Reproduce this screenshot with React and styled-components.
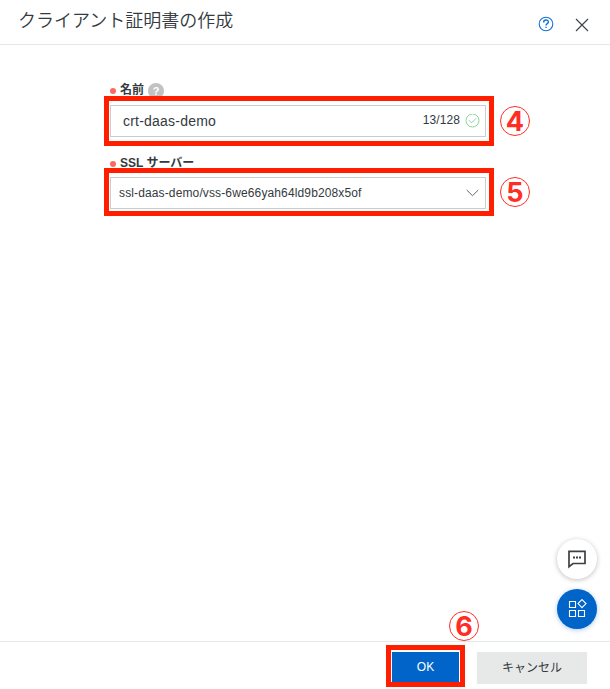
import React from "react";
import styled, { createGlobalStyle } from "styled-components";

const GlobalStyle = createGlobalStyle`
  * { box-sizing: border-box; }
  body {
    margin: 0;
    background: #fff;
    color: #333a40;
    font-family: "Liberation Sans", "Noto Sans CJK JP", sans-serif;
    font-size: 12px;
  }
`;

const Panel = styled.div`
  display: flex;
  flex-direction: column;
  position: relative;
  height: 689px;
  overflow: hidden;
`;

const Header = styled.header`
  display: flex;
  justify-content: space-between;
  height: 45px;
  padding: 0 20px 0 18px;
  border-bottom: 1px solid #e6e8e8;
`;

const Title = styled.h1`
  margin: 0;
  font: 350 18px/38px "Noto Sans CJK JP", sans-serif;
  white-space: nowrap;
`;

const HeaderActions = styled.div`
  display: flex;
  align-items: center;
  gap: 20px;
  padding-top: 4px;
`;

const Form = styled.main`
  flex: 1;
  padding: 32px 0 0 110px;
`;

const Field = styled.section`
  width: 376px;
  height: ${(p) => p.$height}px;
`;

const Label = styled.div`
  display: flex;
  align-items: center;
  height: ${(p) => p.$height}px;
  padding-bottom: ${(p) => p.$gap}px;
  font: 700 12px/18px "Liberation Sans", "Noto Sans CJK JP", sans-serif;
`;

const Required = styled.span`
  width: 6px;
  height: 6px;
  margin: ${(p) => p.$drop}px 4px 0 0;
  border-radius: 50%;
  background: #fb6a61;
`;

const Hint = styled.span`
  width: 16px;
  height: 16px;
  margin: 3px 0 0 4px;
  border-radius: 50%;
  background: #c2c2c2;
  color: #fff;
  text-align: center;
  font: 700 11px/16px "Liberation Sans", sans-serif;
`;

const Control = styled.div`
  position: relative;
  display: flex;
  align-items: center;
  height: 32px;
  padding: 0 5px 0 ${(p) => p.$inset}px;
  border: 1px solid #c9cdcd;
  font-size: ${(p) => p.$size}px;
`;

const Value = styled.span`
  flex: 1;
  white-space: nowrap;
  letter-spacing: ${(p) => p.$tracking}px;
`;

const Counter = styled.span`
  margin: -3px 5px 0 0;
  font-size: 12px;
  letter-spacing: 0.1px;
`;

const Highlight = styled.div`
  position: absolute;
  top: ${(p) => p.$top}px;
  right: ${(p) => p.$right}px;
  bottom: ${(p) => p.$bottom}px;
  left: ${(p) => p.$left}px;
  border: 5px solid #ff1f00;
  pointer-events: none;
`;

const Step = styled.div`
  position: absolute;
  left: ${(p) => p.$left}px;
  top: ${(p) => p.$top}px;
  width: 30px;
  height: 30px;
  border: 1.4px solid #ff2d24;
  border-radius: 50%;
  color: #ff2d24;
  text-align: center;
  font: 700 27px/30px "Inter", sans-serif;
`;

const FloatingButton = styled.button`
  position: absolute;
  right: 13px;
  bottom: ${(p) => p.$bottom}px;
  display: flex;
  align-items: center;
  justify-content: center;
  width: 40px;
  height: 40px;
  padding: 0;
  border: 0;
  border-radius: 50%;
  background: ${(p) => (p.$primary ? "#0064c8" : "#fff")};
  box-shadow: 0 1px 5px ${(p) => (p.$primary ? "#0064c855" : "#00000040")};
`;

const Footer = styled.footer`
  display: flex;
  align-items: flex-start;
  justify-content: flex-end;
  gap: 18px;
  height: 48px;
  padding: 10px 23px 0 0;
  border-top: 1px solid #e6e8e8;
`;

const ButtonSlot = styled.div`
  position: relative;
`;

const Button = styled.button`
  display: block;
  width: ${(p) => p.$width}px;
  height: ${(p) => p.$height}px;
  padding: 0;
  border: 0;
  background: ${(p) => (p.$primary ? "#0064c8" : "#e7e9e8")};
  color: ${(p) => (p.$primary ? "#fff" : "#333a40")};
  font: 400 12px/30px "Liberation Sans", "Noto Sans CJK JP", sans-serif;
`;

const Icon = styled.svg`
  display: block;
  flex: none;
  fill: none;
  stroke: ${(p) => p.$color};
  stroke-width: ${(p) => p.$weight || 1};
`;

export default function App() {
  return (
    <>
      <GlobalStyle />
      <Panel>
        <Header>
          <Title>クライアント証明書の作成</Title>
          <HeaderActions>
            <Icon width="16" height="16" viewBox="0 0 16 16" $color="#1472d2" $weight={1.1}>
              <circle cx="8" cy="8" r="6.8" />
              <path d="M5.6 6.4C5.6 3.2 10.5 3.4 10.4 6.1C10.3 7.7 8 7.7 8 9.6M8 10.7V12.1" strokeWidth="1.4" />
            </Icon>
            <Icon width="16" height="16" viewBox="0 0 16 16" $color="#414447" $weight={1.15}>
              <path d="M2 3 14 15M14 3 2 15" />
            </Icon>
          </HeaderActions>
        </Header>

        <Form>
          <Field $height={72}>
            <Label $height={28} $gap={3}>
              <Required $drop={3} />
              名前
              <Hint>?</Hint>
            </Label>
            <Control $inset={12} $size={14}>
              <Value $tracking={0.22}>crt-daas-demo</Value>
              <Counter>13/128</Counter>
              <Icon width="15" height="15" viewBox="0 0 15 15" $color="#8ed79d">
                <circle cx="7.5" cy="6.5" r="6.5" />
                <path d="m4 6.2 2.6 2.7L11 4.4" />
              </Icon>
              <Highlight $top={-10} $right={-9} $bottom={-10} $left={-7} />
              <Step $left={389} $top={0}>4</Step>
            </Control>
          </Field>
          <Field $height={60}>
            <Label $height={28} $gap={0}>
              <Required $drop={1} />
              SSL サーバー
            </Label>
            <Control $inset={8} $size={12}>
              <Value $tracking={0.13}>ssl-daas-demo/vss-6we66yah64ld9b208x5of</Value>
              <Icon width="15" height="15" viewBox="0 0 15 15" $color="#62676a">
                <path d="m1.7 4 5.8 5.7L13.3 4" />
              </Icon>
              <Highlight $top={-10} $right={-9} $bottom={-8} $left={-7} />
              <Step $left={389} $top={-1}>5</Step>
            </Control>
          </Field>
        </Form>

        <Footer>
          <ButtonSlot>
            <Button $width={67} $height={30} $primary>OK</Button>
            <Highlight $top={-7} $right={-6} $bottom={-5} $left={-6} />
            <Step $left={57} $top={-41}>6</Step>
          </ButtonSlot>
          <Button $width={110} $height={32}>キャンセル</Button>
        </Footer>

        <FloatingButton $bottom={110} aria-label="チャット">
          <Icon width="20" height="20" viewBox="0 0 20 20" $color="#3d4144" $weight={1.7}>
            <path d="M2 2.3H18V14.5H6L2 17.7Z" />
            <path d="M6 8.5H14" strokeWidth="2" strokeDasharray="2 1" />
          </Icon>
        </FloatingButton>
        <FloatingButton $bottom={60} $primary aria-label="メニュー">
          <Icon width="20" height="20" viewBox="0 0 20 20" $color="#fff" $weight={1.1}>
            <path d="M2.5 2.5H8.5V8.5H2.5ZM2.5 11.5H8.5V17.5H2.5ZM11.5 11.5H17.5V17.5H11.5ZM15 0.6 19 4.6 15 8.6 11 4.6Z" />
          </Icon>
        </FloatingButton>
      </Panel>
    </>
  );
}
